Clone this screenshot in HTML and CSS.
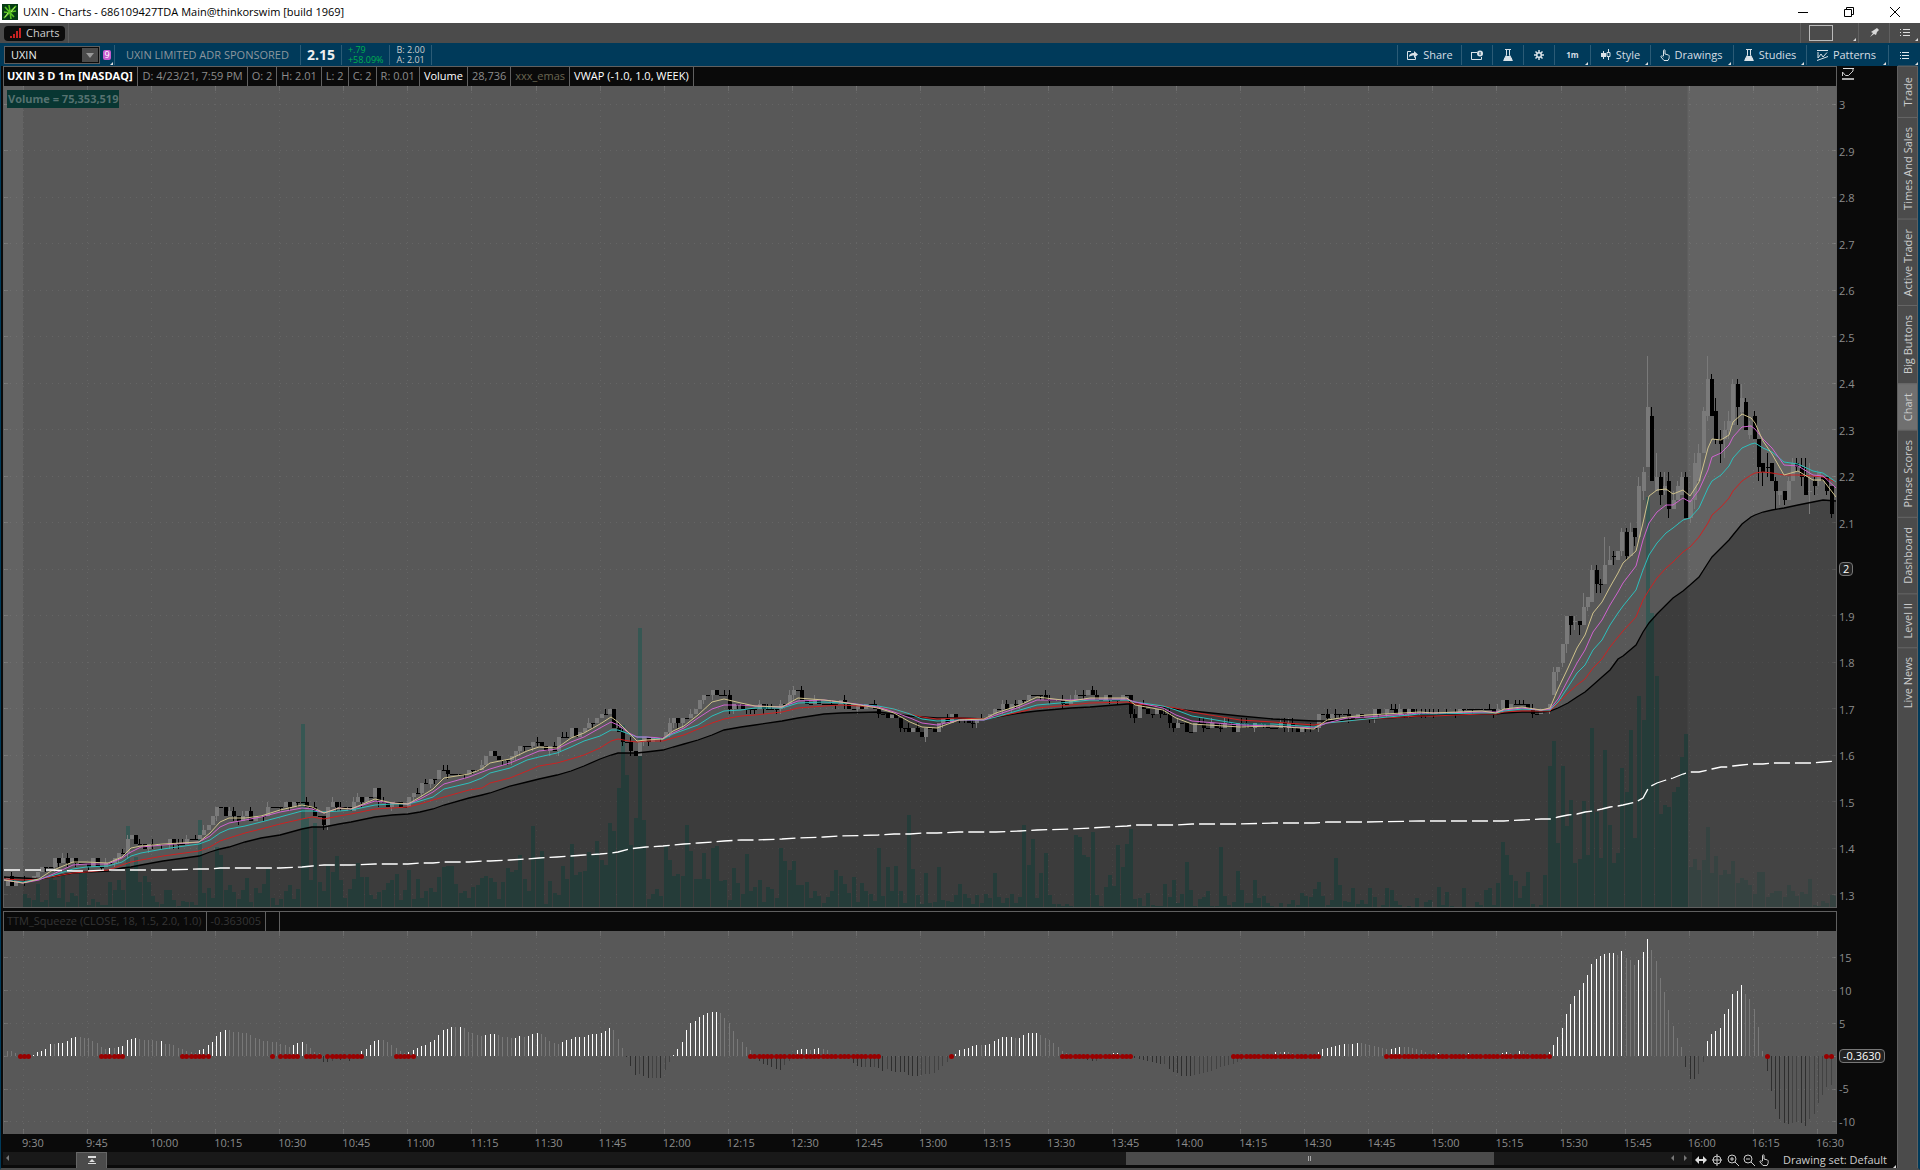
FILE: index.html
```html
<!DOCTYPE html>
<html lang="en">
<head>
	<meta charset="utf-8">
	<title>UXIN - Charts - 686109427TDA Main@thinkorswim [build 1969]</title>
	<link rel="stylesheet" href="styles.css">
</head>
<body>
	<header class="titlebar">
		<svg class="app-icon" width="16" height="16" viewBox="0 0 16 16"><rect width="16" height="16" fill="#063b14"/><path d="M2 14L14 2M3 3l9 10M8 8l6-1M8 9l-6-1M8 8l-1-7M8 8l1 7" stroke="#58c322" stroke-width="1.6"/><path d="M9 8l4-5M6 9l-3 4" stroke="#b6ee6c"/></svg>
		<h1>UXIN - Charts - 686109427TDA Main@thinkorswim [build 1969]</h1>
		<div class="win-buttons">
			<button aria-label="Minimize"><svg width="12" height="12"><path d="M1 6.500h10" stroke="#000"/></svg></button>
			<button aria-label="Restore"><svg width="12" height="12" fill="none" stroke="#000"><path d="M1.500 3.500h7v7h-7zM3.500 3.500v-2h7v7h-2"/></svg></button>
			<button aria-label="Close"><svg width="12" height="12"><path d="M1 1l10 10M11 1L1 11" stroke="#000"/></svg></button>
		</div>
	</header>

	<div class="tabbar">
		<div class="tab-cell"><button class="tab"><svg width="12" height="12"><path d="M0 9h2v2H0zM3 7h2v4H3zM6 4h2v7H6zM9 1h2v10H9z" fill="#c62222"/></svg>Charts</button></div>
		<div class="tab-tools">
			<button class="tool wide more" aria-label="Layout"><svg width="24" height="16"><rect x=".5" y=".5" width="23" height="15" fill="none" stroke="#bbb"/></svg></button>
			<button class="tool" aria-label="Pin"><svg width="10" height="10"><path d="M5 2l3-2 2 2-2 2-1 3-2-1-4 3 3-4-2-1z" fill="#d8d8d8"/></svg></button>
			<button class="tool more" aria-label="Menu"><svg width="10" height="10"><path d="M0 1.500h1M3 1.500h7M0 4.500h1M3 4.500h7M0 7.500h1M3 7.500h7" stroke="#ddd"/></svg></button>
		</div>
	</div>

	<div class="toolbar">
		<div class="symbol">
			<input type="text" value="UXIN" aria-label="Symbol">
			<button aria-label="Choose symbol"><svg width="8" height="5"><path d="M0 0h8L4 5z" fill="#999"/></svg></button>
		</div>
		<button class="link-no more" aria-label="Link group 9"><span>9</span></button>
		<span class="cell name">UXIN LIMITED ADR SPONSORED</span>
		<span class="cell last">2.15</span>
		<span class="cell two change"><span>+.79</span><span>+58.09%</span></span>
		<span class="cell two quote"><span>B: 2.00</span><span>A: 2.01</span></span>
		<div class="tools">
			<button class="t-share"><svg width="12" height="12" fill="none" stroke="#d9e2e8"><path d="M5 2.500H1.500v8h8V8" /><path d="M3 8c0-3 2-4 5-4V2l4 3.500L8 9V6.500C6 6.500 4 7 3 8z" fill="#d9e2e8" stroke="none"/></svg>Share</button>
			<button class="t-icon" aria-label="Alerts"><svg width="12" height="10"><path d="M6 2.500H.5v7h10V7M0 2.500h6" fill="none" stroke="#d9e2e8"/><circle cx="9" cy="3.500" r="3" fill="#d9e2e8"/><path d="M9 2v3" stroke="#003a5a"/></svg></button>
			<button class="t-icon" aria-label="Lab"><svg width="10" height="12"><path d="M2 .5h6M3.500 1v5L1 10.500h8L6.500 6V1" fill="none" stroke="#d9e2e8"/><path d="M3 7h4l3 5H0z" fill="#d9e2e8"/></svg></button>
			<button class="t-icon" aria-label="Settings"><svg width="10" height="10"><path d="M5 0v10M0 5h10M1.500 1.500l7 7M8.500 1.500l-7 7" stroke="#d9e2e8" stroke-width="1.500"/><circle cx="5" cy="5" r="3" fill="#d9e2e8"/><circle cx="5" cy="5" r="1.500" fill="#003a5a"/></svg></button>
			<button class="t-frame more">1m</button>
			<button class="t-style more"><svg width="10" height="12"><path d="M2.500 2v8M7.500 0v3M7.500 8v3" stroke="#d9e2e8"/><path d="M0 4h5v4H0z" fill="#d9e2e8"/><path d="M6 3.500h3v4H6z" fill="none" stroke="#d9e2e8"/></svg>Style</button>
			<button class="t-draw more"><svg width="10" height="12"><path d="M3.500 7V1.500c0-1 1.500-1 1.500 0V5l3.500 1c1 .5.8 2 .5 3.500L8 11.500H4L1 8c-.6-1 .8-1.500 1.500-.8L3.500 8" fill="none" stroke="#d9e2e8"/></svg>Drawings</button>
			<button class="t-study more"><svg width="10" height="12"><path d="M2 .5h6M3.500 1v5L1 10.500h8L6.500 6V1" fill="none" stroke="#d9e2e8"/><path d="M3 7h4l3 5H0z" fill="#d9e2e8"/></svg>Studies</button>
			<button class="t-pattern more"><svg width="11" height="12" fill="none" stroke="#d9e2e8"><path d="M0 1.500h11M0 11.500l11-4M1 3v6l3-4 2 3 4-4.500"/></svg>Patterns</button>
			<button class="t-menu more" aria-label="Chart menu"><svg width="9" height="9"><path d="M0 1.500h1M2 1.500h7M0 4.500h1M2 4.500h7M0 7.500h1M2 7.500h7" stroke="#dfe7ec"/></svg></button>
		</div>
	</div>

	<main class="workspace">
		<div class="charts">
			<section class="panel price">
				<div class="frame">
					<div class="legend">
						<b>UXIN 3 D 1m [NASDAQ]</b><span>D: 4/23/21, 7:59 PM</span><span>O: 2</span><span>H: 2.01</span><span>L: 2</span><span>C: 2</span><span>R: 0.01</span><span class="white">Volume</span><span>28,736</span><span class="olive">xxx_emas</span><span class="white">VWAP (-1.0, 1.0, WEEK)</span>
					</div>
					<div class="plot">
						<svg id="price" viewBox="4 86 1832 821" preserveAspectRatio="none"></svg>
						<div class="vol-tag">Volume = 75,353,519</div>
					</div>
				</div>
				<div class="axis" id="priceAxis">
					<svg class="scale-icon" width="13" height="13"><path d="M1 1.500h11" stroke="#ddd"/><path d="M0 12h12" stroke="#aaa" stroke-width="2"/><path d="M.5 9V5l3 3.500h3L11 4V2" stroke="#ccc" fill="none"/></svg>
				</div>
			</section>
			<section class="panel squeeze">
				<div class="frame">
					<div class="legend dim"><span>TTM_Squeeze (CLOSE, 18, 1.5, 2.0, 1.0)</span><span>-0.363005</span><span class="blank"></span></div>
					<div class="plot"><svg id="squeeze" viewBox="4 931 1832 203" preserveAspectRatio="none"></svg></div>
				</div>
				<div class="axis" id="squeezeAxis"></div>
			</section>
			<div class="times" id="times"></div>
			<div class="bottom">
				<div class="track first"><svg width="5" height="7"><path d="M4 0v6L1 3z" fill="#777"/></svg></div>
				<button class="collapse" aria-label="Show gadgets"><svg width="8" height="9"><path d="M0 1h8" stroke="#ddd" stroke-width="2"/><path d="M4 3l3 3H1zM0 7h8v1H0z" fill="#ddd"/></svg></button>
				<div class="track scroll">
					<div class="thumb"><svg width="4" height="5"><path d="M.5 0v5M2.500 0v5" stroke="#aaa"/></svg></div>
					<svg class="arrows" width="16" height="7"><path d="M3 0v6L0 3zM13 0v6l3-3z" fill="#777"/></svg>
				</div>
				<div class="bottom-tools">
					<button aria-label="Pan"><svg width="12" height="12"><path d="M0 6l4-4v3h4V2l4 4-4 4V7H4v3z" fill="#ddd"/></svg></button>
					<button aria-label="Crosshair"><svg width="12" height="12" fill="none" stroke="#ccc"><circle cx="6" cy="6" r="4"/><path d="M6 0v12M1 6h10"/></svg></button>
					<button aria-label="Zoom in"><svg width="12" height="12" fill="none" stroke="#ccc"><circle cx="5" cy="5" r="4"/><path d="M3 5h4M5 3v4M8 8l4 4"/></svg></button>
					<button aria-label="Zoom out"><svg width="12" height="12" fill="none" stroke="#ccc"><circle cx="5" cy="5" r="4"/><path d="M3 5h4M8 8l4 4"/></svg></button>
					<button aria-label="Pointer"><svg width="10" height="12" fill="none" stroke="#ccc"><path d="M3.500 7V1.500c0-1 1.500-1 1.500 0V5l3.500 1c1 .5.8 2 .5 3.500L8 11.500H4L1 8c-.6-1 .8-1.500 1.500-.8L3.500 8"/></svg></button>
				</div>
				<button class="drawing-set more">Drawing set: Default</button>
			</div>
		</div>
		<nav class="gadgets">
			<button>Trade</button>
			<button>Times And Sales</button>
			<button>Active Trader</button>
			<button>Big Buttons</button>
			<button class="active">Chart</button>
			<button>Phase Scores</button>
			<button>Dashboard</button>
			<button>Level II</button>
			<button>Live News</button>
		</nav>
	</main>
	<script src="chart.js"></script>
</body>
</html>
```
FILE: styles.css
```css
*{
	box-sizing: border-box;
	margin: 0;
	padding: 0;
}
body{
	display: flex;
	flex-direction: column;
	min-height: 100vh;
	background: #0a0a0a;
	color: #ccc;
	font: 11px/16px "Open Sans", "Noto Sans", sans-serif;
	overflow: hidden;
}
button, input{
	font: inherit;
	color: inherit;
	background: none;
	border: 0;
	border-radius: 0;
}
button{
	display: flex;
	align-items: center;
	justify-content: center;
	white-space: nowrap;
}
svg{
	display: block;
	flex: none;
}

/* small corner triangle on buttons that open a menu */
.more{
	position: relative;
}
.more:after{
	content: "";
	position: absolute;
	right: 2px;
	bottom: 2px;
	border-left: 3px solid transparent;
	border-bottom: 3px solid #ddd;
}

.titlebar{
	display: flex;
	align-items: center;
	height: 23px;
	padding-left: 2px;
	background: #fff;
	color: #000;
}
.titlebar h1{
	margin-left: 5px;
	font-size: 11px;
	font-weight: normal;
}
.win-buttons{
	display: flex;
	margin-left: auto;
	padding-right: 2px;
}
.win-buttons button{
	width: 46px;
	height: 20px;
}

.tabbar{
	display: flex;
	height: 20px;
	background: #4b4b4b;
}
.tab-cell{
	display: flex;
	align-items: center;
	padding: 0 3px 0 4px;
	border-right: 1px solid #5c5c5c;
}
.tab{
	gap: 4px;
	height: 15px;
	padding: 0 6px;
	border-radius: 4px;
	background: #0c0c0c;
}
.tab-tools{
	display: flex;
	margin-left: auto;
}
.tool{
	width: 31px;
	border-left: 1px solid #606060;
}
.tool.wide{
	width: 58px;
	justify-content: flex-start;
	padding-left: 8px;
}

.toolbar{
	display: flex;
	align-items: stretch;
	height: 23px;
	padding: 2px 0 1px 4px;
	background: #003a5a;
}
.symbol{
	display: flex;
	width: 96px;
	height: 18px;
	margin-top: 1px;
	border: 1px solid #5e5e5e;
	background: #0b0b0b;
	color: #eee;
}
.symbol input{
	width: 76px;
	padding-left: 6px;
	outline: 0;
}
.symbol button{
	width: 16px;
	margin: 1px;
	background: #4b4b4b;
}
.link-no{
	width: 14px;
}
.link-no span{
	width: 8px;
	background: #c65bd0;
	color: #fff;
	font-size: 9px;
	line-height: 10px;
	border-radius: 2px;
}
.link-no:after{
	right: 1px;
	bottom: 0;
}
.cell{
	display: flex;
	align-items: center;
	border-left: 1px solid #2b5b76;
}
.name{
	padding: 0 11px;
	color: #8c969d;
}
.last{
	padding: 0 6px;
	color: #eee;
	font-size: 14px;
	font-weight: bold;
}
.two{
	flex-direction: column;
	align-items: flex-start;
	justify-content: center;
	padding: 0 6px;
	font-size: 9px;
	line-height: 10px;
}
.change{
	color: #00b050;
}
.quote{
	border-right: 1px solid #2b5b76;
	color: #ccc;
}
.tools{
	display: flex;
	margin-left: auto;
	color: #d5dee4;
}
.tools button{
	gap: 5px;
	border-left: 1px solid #2b5b76;
}
.t-share{ width: 64px; }
.t-icon{ width: 31px; }
.t-frame{ width: 36px; font-size: 8px; font-weight: bold; }
.t-style{ width: 60px; }
.t-draw{ width: 83px; }
.t-study{ width: 73px; }
.t-pattern{ width: 82px; }
.t-menu{ width: 32px; }
.tools .t-draw, .tools .t-pattern{
	padding-right: 2px;
}
.tools .more:after{
	bottom: 0;
}

.workspace{
	display: flex;
	flex: 1;
	border-left: 1px solid #003a5a;
	border-right: 2px solid #003a5a;
	border-bottom: 2px solid #4b4b4b;
}
.charts{
	display: flex;
	flex: 1;
	flex-direction: column;
	min-width: 0;
}
.panel{
	display: flex;
	padding-left: 2px;
}
.price{
	flex: 842 1 0;
}
.squeeze{
	flex: 223 1 0;
	padding-top: 3px;
}
.frame{
	display: flex;
	flex: 1;
	flex-direction: column;
	min-width: 0;
	border: 1px solid #606060;
	border-bottom: 0;
}
.price .frame{
	border-bottom: 1px solid #606060;
}
.legend{
	display: flex;
	height: 19px;
	color: #8c8c8c;
}
.legend > *{
	padding: 0 4px;
	line-height: 18px;
	border-right: 1px solid #606060;
	white-space: nowrap;
}
.legend > :first-child{
	padding: 0 4px 0 3px;
}
.legend b{
	margin-right: 1px;
}
.legend b, .legend .white{
	color: #fff;
}
.legend .olive{
	color: #6b6652;
}
.legend.dim{
	color: #353535;
}
.legend .blank{
	width: 14px;
}
.plot{
	position: relative;
	flex: 1;
	min-height: 0;
	background: #585858;
}
.plot > svg{
	position: absolute;
	width: 100%;
	height: 100%;
}
.vol-tag{
	position: absolute;
	left: 3px;
	top: 4px;
	padding: 0 1px;
	background: #083632;
	color: #567270;
	font-weight: bold;
	line-height: 18px;
}

.axis{
	display: flex;
	flex-direction: column;
	align-items: flex-start;
	justify-content: space-between;
	position: relative;
	width: 60px;
	padding: 30px 0 3px 2px;
	color: #8c8c8c;
}
.axis span{
	padding: 1px 0;
}
.axis .mark{
	margin: 1px 0 3px;
	padding: 0 3px;
	border: 1px solid #777;
	border-radius: 4px;
	background: #222;
	color: #fff;
	line-height: 12px;
}
#squeezeAxis{
	padding-top: 38px;
}
#squeezeAxis .mark{
	margin: 2px 0;
}
.scale-icon{
	position: absolute;
	left: 5px;
	top: 1px;
}
.times{
	display: grid;
	grid-template-columns: repeat(29, minmax(0, 1fr));
	height: 18px;
	padding: 1px 17px 0 21px;
	color: #8c8c8c;
}

.bottom{
	display: flex;
	align-items: center;
	height: 16px;
	padding-left: 2px;
}
.track{
	display: flex;
	align-items: center;
	align-self: flex-start;
	height: 13px;
	background: #191919;
}
.track.first{
	width: 73px;
	padding-left: 2px;
}
.collapse{
	width: 31px;
	height: 16px;
	border: 1px solid #666;
	border-bottom: 0;
	background: #4b4b4b;
}
.scroll{
	flex: 1;
	justify-content: flex-end;
	padding-right: 5px;
}
.thumb{
	display: flex;
	align-items: center;
	justify-content: center;
	width: 23.3%;
	height: 13px;
	background: #4b4b4b;
}
.arrows{
	margin-left: 177px;
}
.bottom-tools{
	display: flex;
	gap: 4px;
	padding: 0 14px 0 3px;
}
.drawing-set{
	padding-right: 10px;
	height: 16px;
}
.drawing-set:after{
	bottom: 0;
	right: 1px;
}

.gadgets{
	width: 21px;
	background: #4b4b4b;
	border-left: 1px solid #606060;
	border-right: 1px solid #606060;
}
.gadgets button{
	width: 19px;
	padding: 9px 0;
	border-bottom: 1px solid #666;
	writing-mode: vertical-rl;
	transform: rotate(180deg);
	line-height: 19px;
}
.gadgets button:first-child{
	padding: 10px 0;
}
.gadgets .active{
	background: #707070;
}
```
FILE: chart.js
```js
var NS = "http://www.w3.org/2000/svg";
var STEP = 4.271;

// x of the middle of a one minute bar, 0 = 9:30
function barX(i){
	return 25 + STEP * i;
}
function priceY(cents){
	return 104.5 + (300 - cents) * 4.65;
}
function add(svg, tag, attrs){
	var el = document.createElementNS(NS, tag);
	for(var k in attrs){
		el.setAttribute(k, attrs[k]);
	}
	svg.appendChild(el);
	return el;
}
function rect(x, y, w, h){
	return "M" + x.toFixed(1) + " " + y.toFixed(1) + "h" + w + "v" + h.toFixed(1) + "h-" + w + "z";
}

// x, fast ema, ema 2, ema 3, ema 4, slow ema, vwap
var lines = [
	[4,880,880,880,879,877,870],[23,883,883,882,880,878,870],[39,879,880,879,879,879,870],[51,871,875,876,877,877,870],
	[73,862,865,869,873,873,871],[86,862,864,867,872,872,871],[108,863,864,866,870,871,870],[122,857,858,862,865,868,870],
	[131,848,852,856,862,867,870],[141,846,847,853,860,865,870],[163,844,845,849,856,861,870],[199,842,842,844,851,856,869],
	[210,833,836,840,847,852,869],[220,822,827,833,841,849,868],[229,818,823,829,838,847,868],[245,818,820,826,833,842,868],
	[261,816,817,822,829,838,868],[280,810,812,817,824,835,868],[302,805,808,811,819,829,867],[312,807,809,811,817,827,866],
	[324,813,813,812,819,827,865],[339,808,808,811,816,824,865],[351,809,809,810,814,822,865],[375,799,801,805,809,817,864],
	[392,803,803,804,808,815,864],[408,804,804,804,807,814,864],[420,797,799,801,804,812,863],[433,789,792,797,800,809,863],
	[444,778,784,789,797,805,862],[469,774,777,783,790,798,862],[482,769,772,778,788,795,861],[490,763,769,773,783,793,861],
	[510,759,763,768,778,786,860],[527,751,756,760,771,782,859],[539,747,751,757,766,779,858],[557,748,749,753,763,775,857],
	[571,738,742,747,759,771,856],[584,733,737,741,755,766,855],[600,724,728,736,748,759,854],[611,717,722,730,741,755,853],
	[618,722,725,730,739,753,852],[629,733,733,734,741,753,849],[637,741,737,737,742,753,848],[646,740,737,737,741,752,847],
	[663,739,738,739,741,750,846],[673,731,733,734,738,747,845],[684,726,728,730,735,744,844],[698,715,718,725,729,740,843],
	[712,702,709,716,723,735,842],[724,699,705,711,719,730,841],[741,703,705,710,716,727,840],[755,706,706,708,715,725,840],
	[782,707,707,708,712,721,839],[798,698,701,703,708,718,838],[824,700,700,702,706,714,837],[841,702,702,703,705,713,836],
	[878,708,707,706,707,712,835],[894,713,712,709,709,714,834],[910,722,718,714,714,716,834],[922,727,723,719,717,717,833],
	[937,728,725,721,719,718,833],[959,720,720,720,718,718,832],[984,719,720,720,719,719,832],[996,713,715,717,717,717,832],
	[1020,705,707,710,712,713,831],[1037,697,700,705,708,711,830],[1071,701,700,702,705,708,829],[1090,698,699,700,703,707,828],
	[1127,698,699,700,702,704,826],[1135,705,702,702,704,704,825],[1163,710,708,706,706,707,825],[1176,718,715,710,708,709,825],
	[1192,724,721,716,712,711,824],[1240,727,725,724,720,716,824],[1273,726,726,724,722,719,823],[1314,729,728,727,725,721,823],
	[1327,720,723,723,723,721,822],[1347,717,718,721,721,720,822],[1367,715,717,719,719,719,822],[1420,712,713,714,716,716,821],
	[1433,713,713,714,716,715,821],[1482,711,712,713,714,714,821],[1496,713,712,713,714,714,821],[1504,709,710,711,712,713,821],
	[1522,707,708,709,711,712,820],[1541,710,710,710,711,712,819],[1550,708,709,710,711,711,819],[1558,689,699,702,703,708,817],
	[1568,668,680,687,693,703,815],[1577,648,663,673,685,697,814],[1585,635,650,665,679,692,812],[1593,613,632,650,668,685,811],
	[1602,602,620,640,659,677,809],[1610,587,605,625,647,670,807],[1618,573,592,613,637,659,806],[1623,563,583,606,631,656,805],
	[1636,551,566,590,617,645,802],[1643,523,540,570,600,632,798],[1649,496,523,555,590,623,787],[1657,490,512,543,578,614,783],
	[1666,489,505,533,568,605,780],[1673,494,505,528,562,598,778],[1683,490,498,520,552,591,774],[1690,496,502,518,547,585,772],
	[1699,482,490,508,537,577,772],[1708,448,470,488,523,563,770],[1712,439,457,481,515,557,769],[1721,440,453,475,507,548,767],
	[1729,435,445,466,498,540,767],[1733,422,437,458,491,535,766],[1742,414,427,448,481,524,765],[1751,418,426,444,475,517,764],
	[1755,423,429,443,473,515,764],[1763,441,439,448,472,512,764],[1772,454,448,452,473,510,763],[1784,475,465,462,475,508,763],
	[1798,471,466,464,475,505,763],[1813,480,475,471,476,502,763],[1823,480,476,473,477,500,762],[1836,497,488,482,482,501,761]
];

var volume = [
	13,9,7,23,5,7,32,27,9,31,5,14,11,35,35,2,8,5,2,2,25,17,27,17,81,37,50,25,31,25,
	11,5,3,17,17,7,1,6,5,5,2,87,14,19,9,60,52,17,22,15,8,17,29,5,19,14,23,38,9,2,
	8,16,22,8,18,183,89,27,84,25,16,43,35,51,27,9,18,28,44,30,30,12,8,15,17,24,27,33,7,17,
	37,8,28,9,16,19,15,30,40,41,41,23,14,16,9,20,22,29,31,29,25,8,25,39,35,37,52,28,16,81,
	49,56,3,26,14,12,41,28,63,32,35,36,55,52,66,47,42,84,76,119,182,132,62,89,279,87,8,13,18,11,
	61,47,31,33,31,82,56,28,28,54,28,59,61,26,27,7,39,24,13,53,16,20,27,5,20,18,9,59,46,37,
	46,22,22,25,9,16,11,4,10,16,37,31,23,14,30,5,24,16,13,6,59,11,40,16,41,16,4,92,38,
	12,3,34,4,5,40,7,6,5,12,23,13,9,3,12,4,13,9,34,10,4,9,13,4,10,82,42,68,9,34,
	54,12,3,3,1,3,1,72,70,52,50,75,12,1,20,32,21,62,40,63,78,8,9,1,14,2,1,1,23,10,
	27,4,13,45,17,1,8,10,16,1,1,60,11,2,5,36,17,4,4,27,9,11,4,1,0,4,0,3,7,2,14,
	11,10,18,25,11,2,7,49,22,6,5,19,3,7,3,19,10,0,2,19,17,6,2,0,1,0,9,0,5,7,
	0,20,2,15,1,0,0,19,0,0,5,2,17,19,2,24,65,52,32,26,9,21,35,3,0,2,32,141,166,64,
	141,81,107,44,48,106,52,179,95,49,157,82,44,54,139,115,177,69,211,187,410,294,231,93,102,100,115,120,150,173,
	40,48,37,47,80,34,51,32,37,33,46,24,29,27,22,13,35,35,10,14,16,16,10,22,16,11,15,13,28,2,1,6,4,12,11
];

// high, body top, body bottom, low in cents and direction, from bar 358 on
var rally = [
	[179,178,173,173,1],[179,179,178,176,1],[184,184,180,179,1],[190,190,184,182,1],[190,190,188,186,0],[190,189,189,187,1],
	[189,189,188,186,0],[195,192,188,188,1],[194,194,192,191,1],[201,200,193,193,1],[201,200,197,195,0],[198,197,197,195,0],
	[207,201,197,197,1],[205,202,201,201,1],[204,203,203,201,0],[204,204,202,202,1],[209,208,204,203,1],[209,208,203,202,0],
	[210,208,203,203,1],[209,209,207,205,0],[220,218,207,206,1],[222,221,217,215,1],[246,235,222,222,1],[235,233,219,219,0],
	[225,220,217,217,1],[221,220,216,214,0],[221,218,217,216,1],[221,219,213,211,0],[217,215,213,213,1],[219,218,215,215,1],
	[221,220,216,216,1],[221,220,211,211,0],[215,215,211,210,1],[225,223,215,213,1],[227,225,219,219,1],[235,234,225,225,1],
	[246,241,233,232,1],[242,241,233,233,0],[237,234,228,227,0],[230,228,227,223,0],[232,230,228,224,1],[234,232,230,228,1],
	[241,240,231,231,1],[241,240,235,231,0],[240,237,234,233,1],[237,236,230,230,0],[232,231,229,228,1],[234,233,228,228,0],
	[228,228,222,219,0],[223,223,221,218,0],[225,222,222,220,0],[223,223,219,219,0],[220,219,217,213,0],[217,217,216,214,1],
	[217,217,215,214,0],[220,219,215,215,1],[224,223,219,219,1],[224,223,222,221,0],[224,222,220,218,0],[224,220,216,216,0],
	[223,217,217,212,1],[220,219,218,216,0],[221,221,219,218,1],[220,220,219,219,0],[220,220,217,216,0],[218,218,212,211,0]
];

// histogram heights from bar -4 on
var momentum = [
	5,5,3,0,0,0,1,4,5,7,12,11.9,13,13.2,15,18,19,18.9,18,18,15,13,9,7,8,8,9,10,16,17,18,17,16,16,
	15.8,15,15.2,12,12,11,8,7,5,4,3,6,7,11,14,20,24,26,25.9,24,24,23,23,21,18,17,15,15,14,14,12,11,9,11,13,14,12,8,4,3,
	-6,-6.2,-5,-3,-4,-3,-5,-1,0,5,7,11,15,16,15.8,14,11,8,5,3,4,6,8,10,11,14,16,21,26,27,29,28.9,29.2,28,24,23,21,20,
	21,22,22.2,21,19,19,18,18.2,20,19,20,22,23,22,19,15,13,12,14,16,17,19,19.2,19.4,21,22,22.2,23,25,28,26,17,8,-1,-10,
	-19,-18,-20,-22,-22,-21.8,-22,-14,-6,1,7,14,26,33,35,39,41,43,44,44.2,43,38,33,25,17,14,9,6,0,-5,-8,-9,-11,-13,-14,-9,-5,-1,
	6,7,7.2,6,7,8,7,6,1,1,0,0,-3,-7,-10,-11,-11,-11.2,-11,-12,-15,-13,-15,-16,-16.2,-16.4,-19,-20,-20.2,-19,-18,-18,-17,-14,-10,-6,0,
	2,6,7,8,10,11,10.9,11.2,12,15,17,19,19.2,19.4,18,18.2,21,23,23.2,23.4,21,18,16,13,9,5,3,1,0,-1,-1,-4,-5,-5,-2,0,
	1,3,3.2,2,0,-1,-2,-3,-4,-5,-6,-7,-8,-8,-13,-16,-17,-20,-20.2,-20.4,-19,-18,-17,-16,-15,-13,-11,-10,-9,-8,-6,-4,
	0,0,0,0,0,0,2,4,3.9,4,4,3,2,0,0,0,0,4,7,8,9,10,11,12,11.9,12.2,13,13,12,11,10,9,8,7,7.2,8,9,9,9,8,7,6,4,2,1,
	3,1,1,1,1,1,1,3,1,1,1,0,0,0,0,3,4,3,2,5,5,3,1,1,1,1,4,
	11,19,28,42,52,60,66,73,81,92,97,100,102,103,103.2,101,105,98,96,91,96,104,117,106,95,78,64,46,30,18,9,
	-11,-23,-23.2,-18,-6,15,22,25,28,42,47,62,65,71,62,57,47,29,5,-15,-35,-53,-63,-67,-68,-67,-66,-67,-70,-63,-58,-47,-39,-31,-29
];

var squeezeRuns = [[-1,1],[18,23],[37,43],[58,58],[60,64],[66,69],[71,79],[87,91],[170,200],[217,217],[243,259],[283,303],[319,357],[408,408],[422,423]];

function grid(svg, top, bottom, rows){
	var dots = "", ticks = "";
	for(var k = 0; k <= 28; k++){
		var x = Math.round(23 + k * STEP * 15) + 0.5;
		dots += "M" + x + " " + top + "V" + bottom;
		ticks += "M" + x + " " + top + "v5M" + x + " " + bottom + "v-5";
	}
	rows.forEach(function(r){
		var y = Math.round(r) - 0.5;
		dots += "M4 " + y + "H1836";
		ticks += "M4 " + y + "h4M1836 " + y + "h-4";
	});
	add(svg, "path", {d: dots, stroke: "#fff", "stroke-opacity": 0.08, "stroke-dasharray": "1 5", "shape-rendering": "crispEdges"});
	add(svg, "path", {d: ticks, stroke: "#fff", "stroke-opacity": 0.12, "shape-rendering": "crispEdges"});
}

function poly(col){
	return lines.map(function(r){ return r[0] + "," + r[col]; }).join(" ");
}

// value of the fast ema at x
function fastAt(x){
	for(var k = 1; k < lines.length - 1 && lines[k][0] < x; k++){}
	var a = lines[k - 1], b = lines[k];
	return a[1] + (b[1] - a[1]) * (x - a[0]) / (b[0] - a[0]);
}
function noise(n){
	var v = Math.sin(n * 12.9898 + 4.1) * 43758.5453;
	return v - Math.floor(v);
}

function drawPrice(){
	var svg = document.getElementById("price");
	add(svg, "path", {d: "M4 86h19v821H4zM1687.500 86H1836v821h-148.500z", fill: "#636363"});
	var rows = [];
	for(var c = 130; c <= 300; c += 10){
		rows.push(priceY(c));
	}
	grid(svg, 86, 907, rows);

	var day = "", after = "";
	volume.forEach(function(v, i){
		var bar = rect(Math.round(barX(i) - 2), 907 - v, 4, v);
		if(i < 390){ day += bar; }else{ after += bar; }
	});
	add(svg, "path", {d: day, fill: "#365753", "shape-rendering": "crispEdges"});
	add(svg, "path", {d: after, fill: "#4f615f", "shape-rendering": "crispEdges"});

	add(svg, "polygon", {points: poly(5) + " 1836,907 4,907", fill: "#000", "fill-opacity": 0.31});

	var up = "", down = "";
	function candle(i, hi, top, bottom, lo, rising){
		var x = barX(i);
		var h = Math.max(1, (top - bottom) * 4.65);
		var d = rect(Math.round(x - 2), priceY(top), 4, h) + rect(Math.round(x - 1), priceY(hi), 1, Math.max(1, (hi - lo) * 4.65));
		if(rising){ up += d; }else{ down += d; }
	}
	var prev = 132;
	for(var i = -4; i < 358; i++){
		var x = barX(i);
		var y = fastAt(x), slope = y - fastAt(x - STEP);
		var close = Math.round(300 - (y + slope * 3 - 104.5) / 4.65 + (noise(i) - 0.5) * 1.8);
		var top = Math.max(prev, close), bottom = Math.min(prev, close);
		candle(i, top + (noise(i + 500) > 0.65 ? 1 : 0), top, bottom, bottom - (noise(i + 900) > 0.65 ? 1 : 0), close > prev);
		prev = close;
	}
	rally.forEach(function(r, k){
		candle(358 + k, r[0], r[1], r[2], r[3], r[4]);
	});
	add(svg, "path", {d: up, fill: "#7a7a7a", "shape-rendering": "crispEdges"});
	add(svg, "path", {d: down, fill: "#000", "shape-rendering": "crispEdges"});

	var colors = ["", "#cfc28c", "#cf63cf", "#2cc0bd", "#cc2222", "#000"];
	for(var n = 5; n > 0; n--){
		add(svg, "polyline", {points: poly(n), fill: "none", stroke: colors[n], "stroke-width": n == 5 ? 1.3 : 1});
	}
	add(svg, "polyline", {points: poly(6), fill: "none", stroke: "#fff", "stroke-width": 1.3, "stroke-dasharray": "16 5"});
}

function drawSqueeze(){
	var svg = document.getElementById("squeeze");
	var zero = 1056;
	grid(svg, 931, 1134, [957.5, 990.5, 1023.5, 1056.5, 1089.5, 1122]);
	var paths = {"#fff": "", "#787878": "", "#2e2e2e": "", "#424242": ""};
	momentum.forEach(function(v, k){
		if(Math.abs(v) < 1){
			return;
		}
		var last = k ? momentum[k - 1] : 9;
		var color = v > 0 ? (v > last ? "#fff" : "#787878") : (v < last ? "#2e2e2e" : "#424242");
		paths[color] += rect(Math.round(barX(k - 4) - 1), v > 0 ? zero - v : zero, 1, Math.abs(v));
	});
	for(var color in paths){
		add(svg, "path", {d: paths[color], fill: color, "shape-rendering": "crispEdges"});
	}
	squeezeRuns.forEach(function(run){
		for(var i = run[0]; i <= run[1]; i++){
			add(svg, "circle", {cx: Math.round(barX(i)) - 0.5, cy: zero + 0.5, r: 2.5, fill: "#990000"});
		}
	});
}

function label(id, text, mark){
	var el = document.createElement("span");
	el.textContent = text;
	if(mark){
		el.className = "mark";
	}
	document.getElementById(id).appendChild(el);
}

for(var p = 30; p >= 13; p--){
	label("priceAxis", String(p / 10), p == 20);
}
["15", "10", "5", "-0.3630", "-5", "-10"].forEach(function(t){
	label("squeezeAxis", t, t == "-0.3630");
});
for(var t = 0; t <= 28; t++){
	var min = 570 + t * 15;
	label("times", Math.floor(min / 60) + ":" + ("0" + min % 60).slice(-2));
}
drawPrice();
drawSqueeze();
```
